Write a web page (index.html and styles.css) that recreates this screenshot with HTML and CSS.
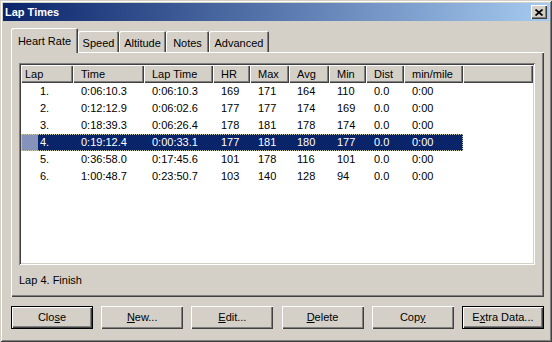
FILE: index.html
```html
<!DOCTYPE html>
<html lang="en">
<head>
  <meta charset="UTF-8">
  <meta name="viewport" content="width=device-width, initial-scale=1.0">
  <title>Lap Times</title>
  <link rel="stylesheet" href="styles.css">
</head>
<body>
  <div class="window">
    <div class="titlebar">
      <span class="title">Lap Times</span>
      <span class="close-btn">
        <svg width="8" height="7" viewBox="0 0 8 7"><path d="M0.5 0.5 L7.5 6.5 M7.5 0.5 L0.5 6.5" stroke="#000" stroke-width="1.7" fill="none"/></svg>
      </span>
    </div>

    <div class="body">
      <div class="tabs">
        <div class="tab active">Heart Rate</div>
        <div class="tab tab-speed">Speed</div>
        <div class="tab tab-altitude">Altitude</div>
        <div class="tab tab-notes">Notes</div>
        <div class="tab tab-advanced">Advanced</div>
      </div>

      <div class="panel">
        <div class="listview">
          <div class="lv-header">
            <div class="hd first">Lap</div>
            <div class="hd">Time</div>
            <div class="hd">Lap Time</div>
            <div class="hd">HR</div>
            <div class="hd">Max</div>
            <div class="hd">Avg</div>
            <div class="hd">Min</div>
            <div class="hd">Dist</div>
            <div class="hd">min/mile</div>
            <div class="hd filler"></div>
          </div>
          <div class="lv-body">
            <div class="lv-row"><div>1.</div><div>0:06:10.3</div><div>0:06:10.3</div><div>169</div><div>171</div><div>164</div><div>110</div><div>0.0</div><div>0:00</div></div>
            <div class="lv-row"><div>2.</div><div>0:12:12.9</div><div>0:06:02.6</div><div>177</div><div>177</div><div>174</div><div>169</div><div>0.0</div><div>0:00</div></div>
            <div class="lv-row"><div>3.</div><div>0:18:39.3</div><div>0:06:26.4</div><div>178</div><div>181</div><div>178</div><div>174</div><div>0.0</div><div>0:00</div></div>
            <div class="lv-row selected"><div>4.</div><div>0:19:12.4</div><div>0:00:33.1</div><div>177</div><div>181</div><div>180</div><div>177</div><div>0.0</div><div>0:00</div></div>
            <div class="lv-row"><div>5.</div><div>0:36:58.0</div><div>0:17:45.6</div><div>101</div><div>178</div><div>116</div><div>101</div><div>0.0</div><div>0:00</div></div>
            <div class="lv-row"><div>6.</div><div>1:00:48.7</div><div>0:23:50.7</div><div>103</div><div>140</div><div>128</div><div>94</div><div>0.0</div><div>0:00</div></div>
          </div>
        </div>
        <div class="status">Lap 4. Finish</div>
      </div>

      <div class="buttons">
        <div class="btn default">Clo<u>s</u>e</div>
        <div class="btn"><u>N</u>ew...</div>
        <div class="btn"><u>E</u>dit...</div>
        <div class="btn"><u>D</u>elete</div>
        <div class="btn">Cop<u>y</u></div>
        <div class="btn default">E<u>x</u>tra Data...</div>
      </div>
    </div>
  </div>
</body>
</html>
```

FILE: styles.css
```css
html, body {
  margin: 0;
  padding: 0;
}
body {
  font-family: 'Liberation Sans', Arial, sans-serif;
  font-size: 11px;
  color: #000;
  background-color: #d4d0c8;
}
.window {
  width: 552px;
  height: 342px;
  box-sizing: border-box;
  padding: 3px;
  background-color: #d4d0c8;
  box-shadow: inset 1px 1px #d4d0c8, inset -1px -1px #404040, inset 2px 2px #fff, inset -2px -2px #808080;
}
.titlebar {
  height: 18px;
  display: flex;
  align-items: center;
  justify-content: space-between;
  padding-left: 2px;
  background: linear-gradient(to right, #0a246a, #a6caf0);
}
.title {
  color: #fff;
  font-weight: bold;
  line-height: 13px;
}
.close-btn {
  width: 16px;
  height: 14px;
  margin-right: 2px;
  display: flex;
  align-items: center;
  justify-content: center;
  background-color: #d4d0c8;
  box-shadow: inset 1px 1px #fff, inset -1px -1px #404040, inset -2px -2px #808080;
}
.body {
  padding: 7px 5px 0 8px;
}
.tabs {
  height: 24px;
  display: flex;
  align-items: flex-end;
}
.tab {
  box-sizing: border-box;
  height: 21px;
  padding-top: 6px;
  line-height: 13px;
  text-align: center;
  border-radius: 2px 2px 0 0;
  box-shadow: inset 1px 1px #fff, inset -1px 0 #404040, inset -2px 0 #808080;
}
.tab.active {
  position: relative;
  z-index: 1;
  width: 67px;
  height: 25px;
  margin-bottom: -1px;
  padding-top: 7px;
  background-color: #d4d0c8;
}
.tab-speed { width: 41px; }
.tab-altitude { width: 47px; }
.tab-notes { width: 43px; }
.tab-advanced { width: 60px; }
.panel {
  height: 245px;
  box-sizing: border-box;
  padding: 11px 9px 0 8px;
  box-shadow: inset 1px 1px #fff, inset -1px -1px #404040, inset -2px -2px #808080;
}
.listview {
  height: 202px;
  box-sizing: border-box;
  padding: 2px;
  background-color: #fff;
  box-shadow: inset 1px 1px #808080, inset -1px -1px #fff, inset 2px 2px #404040, inset -2px -2px #d4d0c8;
}
.lv-header {
  display: grid;
  grid-template-columns: 52px 71px 69px 37px 39px 40px 37px 38px 59px 1fr;
  height: 18px;
  background-color: #d4d0c8;
}
.hd {
  padding-left: 8px;
  line-height: 18px;
  white-space: nowrap;
  box-shadow: inset 1px 1px #fff, inset -1px -1px #404040, inset -2px -2px #808080;
}
.hd.first {
  padding-left: 4px;
}
.lv-row {
  display: grid;
  grid-template-columns: 52px 71px 69px 37px 39px 40px 37px 38px 59px;
  width: 442px;
  height: 17px;
  line-height: 17px;
}
.lv-row > div {
  padding-left: 8px;
  white-space: nowrap;
}
.lv-row > div:first-child {
  padding-left: 19px;
}
.lv-row.selected {
  color: #fff;
  background-color: #0a246a;
  outline: 1px dotted #c8c8a8;
  outline-offset: -1px;
}
.lv-row.selected > div:first-child {
  background: linear-gradient(to right, #d4d0c8 0, #d4d0c8 0, #8592bc 1px, #8592bc 17px, #0a246a 17px);
}
.status {
  margin-top: 9px;
  line-height: 13px;
}
.buttons {
  margin-top: 9px;
  display: flex;
  justify-content: space-between;
}
.btn {
  width: 82px;
  height: 23px;
  line-height: 23px;
  text-align: center;
  box-shadow: inset 1px 1px #fff, inset -1px -1px #404040, inset -2px -2px #808080;
}
.btn.default {
  box-shadow: inset 0 0 0 1px #000, inset 2px 2px #fff, inset -2px -2px #404040, inset -3px -3px #808080;
}
```
